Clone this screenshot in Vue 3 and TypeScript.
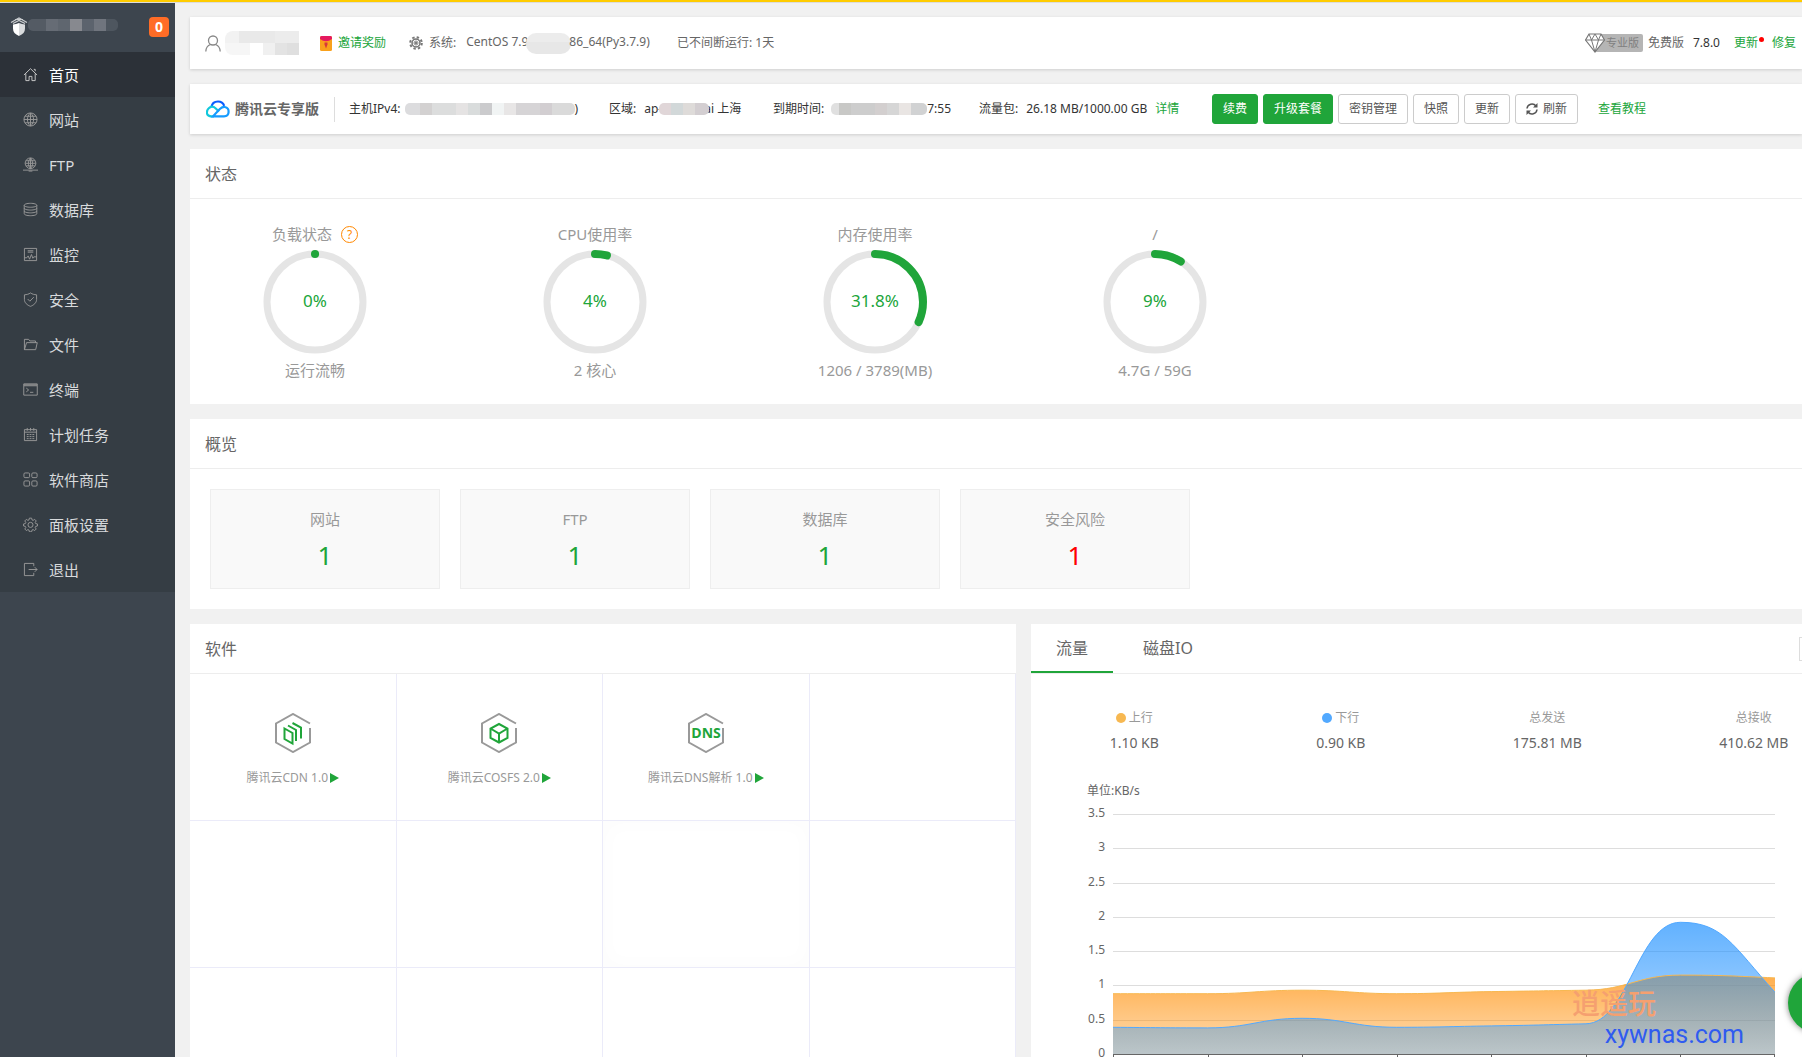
<script setup lang="ts">
interface MenuItem {
  label: string
  path: string
  active?: boolean
}

interface Gauge {
  label: string
  percent: number
  note: string
  help?: boolean
}

const menu: MenuItem[] = [
  { label: '首页', active: true, path: 'M1 8.5 8 1.8l7 6.7M3 7v7.5h3.5V10h3v4.5H13V7M11.5 2.5H13v2' },
  { label: '网站', path: 'M8 1a7 7 0 1 0 0 14A7 7 0 1 0 8 1ZM8 1v14M1 8h14M2.2 4.5h11.6M2.2 11.5h11.6M8 1C3.6 5 3.6 11 8 15M8 1c4.4 4 4.4 10 0 14' },
  { label: 'FTP', path: 'M8 1a5.7 5.7 0 1 0 0 11.4A5.7 5.7 0 1 0 8 1ZM8 1v11.4M2.4 6.7h11.2M3.3 4h9.4M3.3 9.4h9.4M8 1C5 4 5 9.4 8 12.4M8 1c3 3 3 8.4 0 11.4M0 14h16M6 15h4' },
  { label: '数据库', path: 'M8 1.4c-3.8 0-6.7.9-6.7 2.1S4.200 5.600 8 5.600s6.700-.9 6.700-2.100S11.800 1.400 8 1.400ZM1.300 3.500v9C1.300 13.700 4.200 14.600 8 14.600s6.700-.9 6.700-2.100v-9M1.300 6.500c0 1.200 2.900 2.100 6.700 2.100s6.700-.9 6.700-2.100M1.300 9.500c0 1.200 2.900 2.100 6.700 2.100s6.700-.9 6.700-2.100' },
  { label: '监控', path: 'M1.500 1.500h13v13h-13ZM5 4h6M5 5.500h6M1.500 11.500H4l1.500-2 1.500 3.500 2-5 1.500 4 1-1.500h3' },
  { label: '安全', path: 'M8 1C6 2.400 4 2.800 1.500 3v5c0 3.500 3 6 6.500 7.300C11.500 14 14.500 11.500 14.500 8V3C12 2.800 10 2.400 8 1ZM5 7.500l2.300 2.300L11.500 5.500' },
  { label: '文件', path: 'M1.500 13.500v-11h4.500l1.300 1.700h6V6M1.500 13.500 3.800 6h11.400l-1.700 7.500Z' },
  { label: '终端', path: 'M.8 2h14.400v12H.800ZM1 3h14M1 4h14M3.500 6.500 6 8.500 3.500 10.500M7.500 11h3.500' },
  { label: '计划任务', path: 'M1.500 2.800h13v11.700h-13ZM1.500 5.500h13M4.500 1v3M8 1v3M11.500 1v3M4 8h2M7 8h2M10 8h2M4 10.200h2M7 10.200h2M10 10.200h2M4 12.400h2M7 12.400h2M10 12.400h2' },
  { label: '软件商店', path: 'M2.200 1h3.600q1.200 0 1.200 1.200v2.600Q7 6 5.800 6H2.200Q1 6 1 4.800V2.200Q1 1 2.200 1ZM10.600 1h3.200q1.200 0 1.200 1.200v2.600Q15 6 13.800 6h-3.200Q9.400 6 9.400 4.800V2.200Q9.400 1 10.600 1ZM2.200 9.500h3.600Q7 9.500 7 10.700v3.100Q7 15 5.800 15H2.200Q1 15 1 13.800v-3.100Q1 9.500 2.200 9.500ZM10.600 9.500h3.200q1.200 0 1.200 1.200v3.100q0 1.200-1.200 1.200h-3.200q-1.200 0-1.200-1.200v-3.100q0-1.200 1.200-1.200Z' },
  { label: '面板设置', path: 'M6.800 1.200h2.400l.4 1.900 1.200.5 1.600-1.100 1.700 1.700-1.100 1.600.5 1.200 1.900.4v2.200l-1.900.4-.5 1.200 1.100 1.600-1.700 1.700-1.600-1.100-1.200.5-.4 1.900H6.800l-.4-1.900-1.200-.5-1.600 1.100-1.700-1.700L3 11.200 2.500 10l-1.900-.4V7.400L2.500 7 3 5.800 1.900 4.200l1.700-1.700 1.600 1.100 1.200-.5ZM8 5.700a2.700 2.700 0 1 0 0 5.400 2.700 2.700 0 1 0 0-5.400Z' },
  { label: '退出', path: 'M11.500 4.500V1.500h-10v13h10v-3M6 8h9M12.500 5.500 15 8l-2.500 2.500' },
]

const gauges: Gauge[] = [
  { label: '负载状态', percent: 0, note: '运行流畅', help: true },
  { label: 'CPU使用率', percent: 4, note: '2 核心' },
  { label: '内存使用率', percent: 31.8, note: '1206 / 3789(MB)' },
  { label: '/', percent: 9, note: '4.7G / 59G' },
]

const ringLength = 2 * Math.PI * 48
const ringDash = (percent: number) =>
  `${Math.max(0.1, (ringLength * percent) / 100)} ${ringLength}`

const overview = [
  { label: '网站', value: 1 },
  { label: 'FTP', value: 1 },
  { label: '数据库', value: 1 },
  { label: '安全风险', value: 1, danger: true },
]

const plugins = [
  { name: '腾讯云CDN 1.0', icon: 'cdn' },
  { name: '腾讯云COSFS 2.0', icon: 'cos' },
  { name: '腾讯云DNS解析 1.0', icon: 'dns' },
]
const emptySlots = 9

const traffic = [
  { label: '上行', value: '1.10 KB', dot: 'up' },
  { label: '下行', value: '0.90 KB', dot: 'down' },
  { label: '总发送', value: '175.81 MB' },
  { label: '总接收', value: '410.62 MB' },
]

const axisLabels = ['3.5', '3', '2.5', '2', '1.5', '1', '0.5', '0']
const plotWidth = 662
const plotHeight = 240
const maxValue = 3.5
const upload = [0.88, 0.88, 0.93, 0.88, 0.91, 0.93, 1.15, 1.11]
const download = [0.39, 0.38, 0.52, 0.39, 0.41, 0.44, 1.92, 0.9]

/* Monotone cubic smoothing: the curve never overshoots a sample. */
function smoothLine(values: number[]): string {
  const step = plotWidth / (values.length - 1)
  const ys = values.map((v) => plotHeight - (v / maxValue) * plotHeight)
  const slopes = ys.slice(1).map((y, i) => (y - ys[i]) / step)
  const tangents = ys.map((_, i) => {
    if (i === 0) return slopes[0]
    if (i === ys.length - 1) return slopes[i - 1] * 1.5
    const a = slopes[i - 1]
    const b = slopes[i]
    return a * b <= 0 ? 0 : Math.sign(a) * Math.min(Math.abs(a), Math.abs(b))
  })
  const h = step * 0.45
  let d = `M0 ${ys[0].toFixed(1)}`
  for (let i = 1; i < ys.length; i++) {
    const x0 = (i - 1) * step
    const x1 = i * step
    d += `C${(x0 + h).toFixed(1)} ${(ys[i - 1] + tangents[i - 1] * h).toFixed(1)} ${(x1 - h).toFixed(1)} ${(ys[i] - tangents[i] * h).toFixed(1)} ${x1.toFixed(1)} ${ys[i].toFixed(1)}`
  }
  return d
}

const uploadLine = smoothLine(upload)
const downloadLine = smoothLine(download)
const closeArea = (line: string) => `${line}V${plotHeight}H0Z`
const gridY = (i: number) => Math.round((i * plotHeight) / 7) + 0.5
const tickX = (i: number) => Math.min(plotWidth - 0.5, Math.round((i * plotWidth) / 7) + 0.5)
</script>

<template>
  <div class="page">
    <div class="loading-bar"></div>
    <div class="layout">
      <aside class="sidebar">
        <div class="account">
          <svg class="shield" viewBox="0 0 18 20" width="18" height="20" aria-hidden="true">
            <path d="M1 5.500 9 1l8 4.500M3 6.500 9 3.500l6 3M5 2.500h8" fill="none" stroke="#c9cccf" stroke-width="1.200" />
            <path d="M3 7.500c2-.3 4-.8 6-1.500v13c-4-1.800-6-4-6-7.500Z" fill="#fff" />
            <path d="M15 7.500c-2-.3-4-.8-6-1.500v13c4-1.800 6-4 6-7.500Z" fill="#d9dbdd" />
          </svg>
          <span class="mask mask-host"></span>
          <span class="badge">0</span>
        </div>
        <nav class="menu">
          <a v-for="item in menu" :key="item.label" href="#" :class="{ active: item.active }">
            <svg viewBox="0 0 16 16" width="15" height="15" aria-hidden="true"><path :d="item.path" /></svg>
            <span>{{ item.label }}</span>
          </a>
        </nav>
      </aside>

      <main class="main">
        <header class="card bar topbar">
          <div class="user">
            <svg viewBox="0 0 16 17" width="16" height="17" aria-hidden="true">
              <path d="M8 1a4.500 4.500 0 1 0 0 9A4.500 4.500 0 1 0 8 1ZM.8 16.500C1 12.500 3 10.300 5.500 9.500M15.200 16.500C15 12.500 13 10.300 10.500 9.500" fill="none" stroke="#888" stroke-width="1.300" />
            </svg>
            <span class="mask mask-user"></span>
          </div>
          <a href="#" class="invite">
            <svg viewBox="0 0 12 15" width="12" height="15" aria-hidden="true">
              <rect width="12" height="15" rx="1.500" fill="#f9a11b" />
              <path d="M0 1.500Q0 0 1.500 0h9Q12 0 12 1.500V3Q6 7.500 0 3Z" fill="#e5195f" />
              <path d="M4.500 6.500h3v2L6 12.500 4.500 8.500Z" fill="#d8373a" />
            </svg>
            邀请奖励
          </a>
          <div class="system">
            <svg viewBox="0 0 14 14" width="14" height="14" aria-hidden="true">
              <g fill="none" stroke="#777">
                <circle cx="7" cy="7" r="4" stroke-width="1.500" />
                <circle cx="7" cy="7" r="5.800" stroke-width="2" stroke-dasharray="2.400 2.155" />
                <circle cx="7" cy="7" r="1.200" stroke-width="1" />
                <path d="M7 3v8M3 7h8M4.200 4.200l5.600 5.600M9.800 4.200 4.200 9.800" stroke-width=".6" />
              </g>
            </svg>
            <span>系统:</span>
            <span class="os">CentOS 7.9<span class="mask mask-os"></span>86_64(Py3.7.9)</span>
          </div>
          <span>已不间断运行: 1天</span>
          <div class="version">
            <a href="#" class="pro">
              <svg viewBox="0 0 20 20" width="20" height="20" aria-hidden="true">
                <path d="M4 1h12l3.500 6L10 19 .5 7Z" fill="#fff" stroke="#777" stroke-width="1.200" />
                <path d="M.5 7h19M4 1l2.500 6L10 1l3.500 6L16 1M6.500 7 10 19l3.500-12" fill="none" stroke="#777" />
              </svg>
              <span>专业版</span>
            </a>
            <span class="edition">免费版</span>
            <span class="number">7.8.0</span>
            <a href="#" class="update">更新</a>
            <a href="#">修复</a>
          </div>
        </header>

        <section class="card bar cloudbar">
          <div class="brand">
            <svg viewBox="0 0 24 18" width="24" height="18" fill="none" stroke-width="2.200" aria-hidden="true">
              <path d="M5.500 7C6 3.500 8.500 1.500 12 1.500c3 0 5.300 1.700 6.200 4.300" stroke="#0a5cff" />
              <path d="M13 11.500 9.500 8.200C7.500 6.400 5 6.500 3.300 7.800-.3 11-.1 16.300 5.500 16.300H8" stroke="#12c8dc" />
              <path d="M7 16.300h11c6 0 6-8.500.8-9.300-2.300-.3-3.600.8-5 2Z" stroke="#159bff" />
            </svg>
            <strong>腾讯云专享版</strong>
          </div>
          <div class="field field-ip"><span>主机IPv4:</span><span class="mask mask-ip"></span>)</div>
          <div class="field field-zone"><span>区域:</span><span class="after-label">ap-</span><span class="mask mask-zone"></span>ai 上海</div>
          <div class="field field-expire"><span>到期时间:</span><span class="mask mask-expire"></span>7:55</div>
          <div class="field field-flow"><span>流量包:</span><span class="after-label">26.18 MB/1000.00 GB</span><a href="#">详情</a></div>
          <div class="buttons">
            <button type="button" class="primary">续费</button>
            <button type="button" class="primary">升级套餐</button>
            <button type="button">密钥管理</button>
            <button type="button">快照</button>
            <button type="button">更新</button>
            <button type="button">
              <svg viewBox="0 0 12 12" width="12" height="12" aria-hidden="true">
                <path d="M1 5.500A5 5 0 0 1 10 3M11 6.500A5 5 0 0 1 2 9" fill="none" stroke="#555" stroke-width="1.500" />
                <path d="M11.500 0v4.500H7ZM.5 12V7.500H5Z" fill="#555" />
              </svg>
              刷新
            </button>
          </div>
          <a href="#" class="tutorial">查看教程</a>
        </section>

        <div class="wide">
          <section class="card">
            <h2>状态</h2>
            <div class="gauges">
              <div v-for="g in gauges" :key="g.label" class="gauge">
                <div class="gauge-label">
                  {{ g.label }}
                  <a v-if="g.help" href="#" class="help" aria-label="帮助">?</a>
                </div>
                <div class="ring">
                  <svg viewBox="0 0 106 106" width="106" height="106" aria-hidden="true">
                    <circle cx="53" cy="53" r="48" stroke="#e5e5e5" stroke-width="7" />
                    <circle cx="53" cy="53" r="48" stroke="#20a53a" stroke-width="8" stroke-linecap="round" :stroke-dasharray="ringDash(g.percent)" transform="rotate(-90 53 53)" />
                  </svg>
                  <span>{{ g.percent }}%</span>
                </div>
                <div class="gauge-label">{{ g.note }}</div>
              </div>
            </div>
          </section>

          <section class="card">
            <h2>概览</h2>
            <div class="overview">
              <a v-for="o in overview" :key="o.label" href="#" class="tile" :class="{ danger: o.danger }">
                <span>{{ o.label }}</span>
                <b>{{ o.value }}</b>
              </a>
            </div>
          </section>

          <div class="columns">
            <section class="card">
              <h2>软件</h2>
              <div class="plugins">
                <a v-for="p in plugins" :key="p.name" href="#" class="slot">
                  <svg viewBox="0 0 38 40" width="38" height="40" fill="none" aria-hidden="true">
                    <path d="M36 10.500 19 1 2 10.500v19L19 39l17-9.500V15" stroke="#999" stroke-width="2" />
                    <g v-if="p.icon === 'cdn'" stroke="#20a53a" stroke-width="2">
                      <path d="M10.500 15.500 18.500 20v10.500l-8-4.500ZM14 12.500l8 4.500v11M18.500 10l8.500 4.500v11" />
                    </g>
                    <path v-else-if="p.icon === 'cos'" d="M19 11l8.500 4.500v9.500L19 29.500 10.500 25v-9.500ZM10.500 15.500 19 20.500l8.500-5M19 20.500v9" stroke="#20a53a" stroke-width="2" />
                    <text v-else x="19" y="25" text-anchor="middle">DNS</text>
                  </svg>
                  <span class="plugin-name">{{ p.name }}<svg viewBox="0 0 9 10" width="9" height="10" aria-hidden="true"><path d="M0 0 9 5 0 10Z" fill="#20a53a" /></svg></span>
                </a>
                <div v-for="n in emptySlots" :key="n" class="slot" :class="{ shaded: n === 4 }"></div>
              </div>
            </section>

            <section class="card">
              <div class="tabs">
                <button type="button" class="current">流量</button>
                <button type="button">磁盘IO</button>
                <select aria-label="网卡"><option></option></select>
              </div>
              <div class="stats">
                <div v-for="t in traffic" :key="t.label" class="stat">
                  <span class="stat-label"><i v-if="t.dot" :class="t.dot"></i>{{ t.label }}</span>
                  <span class="stat-value">{{ t.value }}</span>
                </div>
              </div>
              <div class="unit">单位:KB/s</div>
              <div class="chart">
                <div class="axis"><span v-for="a in axisLabels" :key="a">{{ a }}</span></div>
                <svg class="plot" viewBox="0 0 662 246" preserveAspectRatio="none" fill="none" role="img" aria-label="流量">
                  <defs>
                    <linearGradient id="upFill" x1="0" y1="0" x2="0" y2="1">
                      <stop offset="0" stop-color="#ff8c00" stop-opacity="0.7" />
                      <stop offset="1" stop-color="#ff8c00" stop-opacity="0.3" />
                    </linearGradient>
                    <linearGradient id="downFill" x1="0" y1="0" x2="0" y2="1">
                      <stop offset="0" stop-color="#1e90ff" stop-opacity="0.7" />
                      <stop offset="1" stop-color="#1e90ff" stop-opacity="0.3" />
                    </linearGradient>
                  </defs>
                  <path v-for="i in 7" :key="i" :d="`M0 ${gridY(i - 1)}H662`" stroke="#ddd" />
                  <path :d="closeArea(uploadLine)" fill="url(#upFill)" />
                  <path :d="closeArea(downloadLine)" fill="url(#downFill)" />
                  <path :d="uploadLine" stroke="#f7b851" />
                  <path :d="downloadLine" stroke="#52a9ff" />
                  <path d="M0 240.500H662" stroke="#666" />
                  <path v-for="i in 8" :key="`t${i}`" :d="`M${tickX(i - 1)} 240v6`" stroke="#666" />
                </svg>
              </div>
            </section>
          </div>
        </div>
      </main>
    </div>

    <div class="watermark">
      <span class="mark-name">逍遥玩</span>
      <span class="mark-site">xywnas.com</span>
    </div>
    <button type="button" class="service" aria-label="客服"></button>
  </div>
</template>

<style>
body {
  overflow: hidden;
  background: #f1f1f1;
}
</style>

<style scoped>
.page {
  position: relative;
  display: flex;
  flex-direction: column;
  height: 100vh;
  overflow: hidden;
  box-sizing: border-box;
  background: #f1f1f1;
  color: #666;
  font: 12px/20px "Noto Sans", "Noto Sans CJK SC", sans-serif;
}
.page * {
  box-sizing: border-box;
}
a {
  color: #20a53a;
  text-decoration: none;
}
button,
select {
  font: inherit;
  color: inherit;
}
.loading-bar {
  flex: none;
  height: 3px;
  background: #fc0;
  border-bottom: 1px solid #ddd;
}
.layout {
  display: flex;
  flex: 1;
  min-height: 0;
}

/* sidebar */
.sidebar {
  flex: none;
  width: 175px;
  background: #3d454e;
}
.account {
  display: flex;
  align-items: center;
  height: 49px;
  padding: 0 6px 0 10px;
}
.shield {
  margin-bottom: 2px;
}
.badge {
  width: 20px;
  height: 20px;
  margin-left: auto;
  margin-bottom: 2px;
  border-radius: 4px;
  background: #ff6c26;
  color: #fff;
  font-size: 14px;
  font-weight: 700;
  text-align: center;
}
.menu {
  background: #353d44;
}
.menu a {
  display: flex;
  align-items: center;
  gap: 11px;
  height: 45px;
  padding-left: 23px;
  color: #d8dadc;
  font-size: 15px;
}
.menu a.active {
  background: #2c3138;
  color: #fff;
}
.menu svg {
  fill: none;
  stroke: #999;
}
.menu .active svg {
  stroke: #ccc;
}

/* censored values */
.mask {
  display: inline-block;
  flex: none;
  height: 12px;
  border-radius: 5px;
}
.mask-host {
  width: 90px;
  margin-bottom: 6px;
  background: linear-gradient(90deg, #545b64 18px, #666c75 18px 30px, #5f666f 30px 42px, #87898f 42px 54px, #5c636d 54px 66px, #70757e 66px 78px, #4e565f 78px);
}
.mask-user {
  width: 74px;
  height: 24px;
  background:
    linear-gradient(90deg, #f6f6f6 25px, #fff 25px 38px, #f0f0f0 38px 50px, #e3e3e3 50px 62px, #dfdfdf 62px) 0 12px / 74px 12px no-repeat,
    linear-gradient(90deg, #f2f2f2 14px, #e9e9e9 14px 50px, #ececec 50px);
  border-radius: 8px 0 0 8px;
}
.mask-os {
  width: 45px;
  height: 21px;
  margin: 0 -2px;
  vertical-align: middle;
  border-radius: 10px;
  background: linear-gradient(#ececec 9px, #e7e7e7 9px);
}
.mask-ip {
  width: 170px;
  margin-left: 4px;
  background: linear-gradient(90deg, #dcdcde 15px, #d3d1d1 15px 27px, #dcdddd 27px 51px, #e5e3e3 51px 63px, #d9dcdc 63px 75px, #cbcbcd 75px 87px, #f1f4f4 87px 99px, #e8e6e6 99px 111px, #d6d4d6 111px 135px, #d2ced1 135px 147px, #dadada 147px);
}
.mask-zone {
  position: relative;
  width: 50px;
  margin: 0 -5px 0 -3px;
  background: linear-gradient(90deg, #e0d6d8 12px, #d2d8d9 12px 24px, #dedbd9 24px 36px, #d3ced1 36px);
}
.mask-expire {
  width: 96px;
  margin-left: 7px;
  background: linear-gradient(90deg, #e0e0e0 8px, #c8c8c6 8px 20px, #cdcdcd 20px 44px, #d3cfcf 44px 56px, #d6d6d6 56px 68px, #e9e5e3 68px 80px, #d1d2d3 80px);
}

/* content */
.main {
  flex: 1;
  min-width: 0;
  padding: 14px 0 0 15px;
  overflow: hidden;
}
.card {
  background: #fff;
}
.bar {
  display: flex;
  align-items: center;
  margin-bottom: 15px;
  padding-left: 15px;
  box-shadow: 0 1px 3px rgba(0, 0, 0, 0.15);
  white-space: nowrap;
}
.topbar {
  height: 52px;
}
.user,
.invite,
.system {
  display: flex;
  align-items: center;
}
.user {
  width: 115px;
  gap: 4px;
}
.invite {
  width: 89px;
  gap: 6px;
}
.system {
  width: 268px;
  gap: 6px;
}
.os {
  margin-left: 4px;
}
.version {
  display: flex;
  align-items: center;
  margin-left: auto;
  padding-right: 6px;
}
.pro {
  display: flex;
  align-items: center;
  color: #808080;
}
.pro svg {
  position: relative;
}
.pro span {
  height: 18px;
  margin-left: -10px;
  padding: 0 4px 0 11px;
  border-radius: 2px;
  background: #b5b5b5;
  font-size: 11px;
  line-height: 18px;
}
.edition {
  margin: 0 9px 0 5px;
}
.number {
  margin-right: 14px;
  color: #333;
}
.update {
  position: relative;
  margin-right: 14px;
}
.update::after {
  content: "";
  position: absolute;
  top: 4px;
  right: -6px;
  width: 5px;
  height: 5px;
  border-radius: 50%;
  background: #f00;
}
.cloudbar {
  height: 50px;
  color: #333;
}
.brand {
  display: flex;
  align-items: center;
  gap: 5px;
  width: 129px;
  height: 25px;
  margin-left: 1px;
  margin-right: 14px;
  border-right: 1px solid #ddd;
  color: #666;
  font-size: 14px;
}
.brand strong {
  font-weight: 700;
}
.field {
  display: flex;
  align-items: center;
}
.field-ip {
  width: 260px;
}
.field-zone {
  width: 164px;
}
.field-expire {
  width: 206px;
}
.field-flow {
  width: 233px;
}
.after-label {
  margin-left: 8px;
}
.field a {
  margin-left: 8px;
}
.buttons {
  display: flex;
  gap: 5px;
}
.buttons button {
  display: flex;
  align-items: center;
  gap: 5px;
  height: 30px;
  padding: 0 10px;
  border: 1px solid #ccc;
  border-radius: 3px;
  background: #fff;
  color: #555;
}
.buttons .primary {
  border-color: #20a53a;
  background: #20a53a;
  color: #fff;
}
.tutorial {
  margin-left: 20px;
}

/* the dashboard keeps a wider sheet than the window and runs off its right edge */
.wide {
  display: flex;
  flex-direction: column;
  gap: 15px;
  margin-right: -55px;
}
h2 {
  height: 50px;
  margin: 0;
  padding-left: 15px;
  border-bottom: 1px solid #ededed;
  font-size: 16px;
  font-weight: 400;
  line-height: 50px;
}
.gauges {
  display: flex;
  gap: 30px;
  padding: 23px 0 22px;
}
.gauge {
  display: flex;
  flex-direction: column;
  align-items: center;
  gap: 3px;
  width: 250px;
}
.gauge-label {
  display: flex;
  align-items: center;
  gap: 9px;
  height: 24px;
  color: #999;
  font-size: 15px;
}
.help {
  width: 17px;
  height: 17px;
  border: 1px solid #f80;
  border-radius: 50%;
  color: #f80;
  font-size: 12px;
  line-height: 15px;
  text-align: center;
}
.ring {
  display: grid;
  place-items: center;
  color: #20a53a;
  font-size: 17px;
}
.ring > * {
  grid-area: 1 / 1;
}
.ring span {
  padding-bottom: 2px;
}
.ring circle {
  fill: none;
}
.overview {
  display: flex;
  gap: 20px;
  padding: 20px;
}
.tile {
  display: flex;
  flex-direction: column;
  align-items: center;
  width: 230px;
  height: 100px;
  padding-top: 17px;
  border: 1px solid #eee;
  background: #f9f9f9;
}
.tile span {
  color: #999;
  font-size: 15px;
  line-height: 24px;
}
.tile b {
  font-size: 26px;
  font-weight: 400;
  line-height: 48px;
}
.tile.danger b {
  color: #f00;
}
.columns {
  display: grid;
  grid-template-columns: 1fr 1fr;
  gap: 15px;
}
.plugins {
  display: grid;
  grid-template-columns: repeat(4, 1fr);
}
.slot {
  display: flex;
  flex-direction: column;
  align-items: center;
  gap: 15px;
  height: 147px;
  padding-top: 39px;
  border-right: 1px solid #ebebf9;
  border-bottom: 1px solid #ebebf9;
  color: #999;
}
.slot.shaded {
  box-shadow: inset 0 0 18px 6px rgba(0, 0, 0, 0.01);
}
.slot text {
  fill: #20a53a;
  font: 700 14px "Open Sans", sans-serif;
}
.plugin-name {
  display: flex;
  align-items: center;
  gap: 2px;
}
.tabs {
  display: flex;
  align-items: center;
  gap: 5px;
  height: 50px;
  border-bottom: 1px solid #ededed;
}
.tabs button {
  height: 49px;
  padding: 0 25px;
  border: 0;
  border-bottom: 2px solid transparent;
  background: none;
  font-size: 16px;
}
.tabs .current {
  border-bottom-color: #20a53a;
}
.tabs select {
  width: 48px;
  height: 24px;
  margin-left: auto;
  margin-right: 10px;
  border: 1px solid #ddd;
  background: #fff;
}
.stats {
  display: grid;
  grid-template-columns: repeat(4, 1fr);
  padding-top: 34px;
}
.stat {
  display: flex;
  flex-direction: column;
  align-items: center;
  gap: 3px;
}
.stat-label {
  display: flex;
  align-items: center;
  gap: 3px;
  color: #999;
}
.stat-label i {
  width: 10px;
  height: 10px;
  border-radius: 50%;
}
.up {
  background: #f7b851;
}
.down {
  background: #52a9ff;
}
.stat-value {
  font-size: 14px;
  line-height: 24px;
}
.unit {
  padding: 26px 0 4px 56px;
}
.chart {
  display: flex;
  gap: 8px;
  padding-right: 82px;
}
.axis {
  display: flex;
  flex-direction: column;
  justify-content: space-between;
  width: 74px;
  height: 256px;
  line-height: 16px;
  text-align: right;
}
.plot {
  flex: 1;
  min-width: 0;
  height: 246px;
  margin-top: 9px;
}

/* overlays */
.watermark {
  position: absolute;
  right: 58px;
  bottom: 7px;
  display: flex;
  flex-direction: column;
  width: 172px;
}
.mark-name {
  color: #f5a070;
  font-size: 28px;
  font-weight: 500;
  line-height: 34px;
}
.mark-site {
  align-self: flex-end;
  color: #2f5bf0;
  font: 25px/30px Roboto, sans-serif;
}
.service {
  position: absolute;
  right: -46px;
  bottom: 24px;
  width: 60px;
  height: 60px;
  padding: 0;
  border: 0;
  border-radius: 50%;
  background: #20a53a;
  box-shadow: 0 0 6px rgba(0, 0, 0, 0.5);
}
</style>
